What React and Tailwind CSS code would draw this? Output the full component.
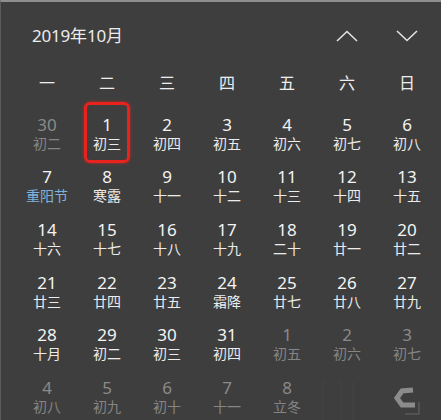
import React from 'react';

const weekdays = ['一', '二', '三', '四', '五', '六', '日'];

// [day, lunar, kind] kind: 'dim' | 'cur' | 'fest'
const rows = [
    [['30', '初二', 'dim'], ['1', '初三', 'cur'], ['2', '初四', 'cur'], ['3', '初五', 'cur'], ['4', '初六', 'cur'], ['5', '初七', 'cur'], ['6', '初八', 'cur']],
    [['7', '重阳节', 'fest'], ['8', '寒露', 'cur'], ['9', '十一', 'cur'], ['10', '十二', 'cur'], ['11', '十三', 'cur'], ['12', '十四', 'cur'], ['13', '十五', 'cur']],
    [['14', '十六', 'cur'], ['15', '十七', 'cur'], ['16', '十八', 'cur'], ['17', '十九', 'cur'], ['18', '二十', 'cur'], ['19', '廿一', 'cur'], ['20', '廿二', 'cur']],
    [['21', '廿三', 'cur'], ['22', '廿四', 'cur'], ['23', '廿五', 'cur'], ['24', '霜降', 'cur'], ['25', '廿七', 'cur'], ['26', '廿八', 'cur'], ['27', '廿九', 'cur']],
    [['28', '十月', 'cur'], ['29', '初二', 'cur'], ['30', '初三', 'cur'], ['31', '初四', 'cur'], ['1', '初五', 'dim'], ['2', '初六', 'dim'], ['3', '初七', 'dim']],
    [['4', '初八', 'dim'], ['5', '初九', 'dim'], ['6', '初十', 'dim'], ['7', '十一', 'dim'], ['8', '立冬', 'dim'], null, null],
];

function DayCell({ cell, selected }) {
    if (!cell) return <div className="h-[52.6px]" />;
    const [day, lunar, kind] = cell;
    const dayColor = kind === 'dim' ? 'text-[#8a8a8a]' : 'text-[#f4f4f4]';
    const lunarColor = kind === 'dim' ? 'text-[#858585]' : kind === 'fest' ? 'text-[#7eb3dc]' : 'text-[#ececec]';
    return (
        <div className="relative h-[52.6px] flex flex-col items-center justify-center">
            {selected && (
                <div className="absolute -top-[5px] left-[7px] w-[46px] h-[61px] border-[3px] border-[#e8221d] rounded-[6px] shadow-[0_0_3px_rgba(232,34,29,0.8)]" />
            )}
            <span className={`text-[17px] leading-[20px] ${dayColor}`}>{day}</span>
            <span className={`text-[14px] leading-[17px] ${lunarColor}`}>{lunar}</span>
        </div>
    );
}

export default function App() {
    return (
        <div
            className="relative w-[441px] h-[420px] overflow-hidden bg-[#3e3e3e] border-t-2 border-t-[#8e8e8e] border-l border-l-[#5c5c5c]"
            style={{ fontFamily: '"Noto Sans", "Noto Sans CJK SC", sans-serif' }}
        >
            <div className="pl-[16px] pr-[4px]">
                {/* Cabecera */}
                <div className="h-[68px] flex items-center">
                    <span className="ml-[15px] text-[17px] text-[#ececec] tracking-[-0.2px]">2019年10月</span>
                    <div className="ml-auto flex">
                        <div className="w-[60px] flex justify-center">
                            <svg width="22" height="12" viewBox="0 0 22 12" fill="none" stroke="#e2e2e2" strokeWidth="1.6">
                                <path d="M1 11 L11 1.5 L21 11" />
                            </svg>
                        </div>
                        <div className="w-[60px] flex justify-center">
                            <svg width="22" height="12" viewBox="0 0 22 12" fill="none" stroke="#e2e2e2" strokeWidth="1.6">
                                <path d="M1 1 L11 10.5 L21 1" />
                            </svg>
                        </div>
                    </div>
                </div>

                {/* Días de la semana */}
                <div className="grid grid-cols-7 h-[26px] items-center">
                    {weekdays.map(w => (
                        <div key={w} className="text-center text-[16px] text-[#eeeeee]">{w}</div>
                    ))}
                </div>

                {/* Grilla */}
                <div className="mt-[11px] grid grid-cols-7">
                    {rows.map((row, ri) =>
                        row.map((cell, ci) => (
                            <DayCell key={`${ri}-${ci}`} cell={cell} selected={ri === 0 && ci === 1} />
                        ))
                    )}
                </div>
            </div>

            {/* marca de agua */}
            <svg className="absolute left-[300px] top-[358px]" width="141" height="62" viewBox="0 0 141 62" fill="none">
                <path d="M22 20 V60 M40 20 V60 M52 22 V60" stroke="#444444" strokeWidth="1" />
                <path d="M112 30 L101 31 L96 38 L101 45 L114 45" stroke="#8c8c8c" strokeWidth="5" />
                <path d="M118 42 V54 M104 54 H118" stroke="#666666" strokeWidth="1" />
            </svg>
        </div>
    );
}
